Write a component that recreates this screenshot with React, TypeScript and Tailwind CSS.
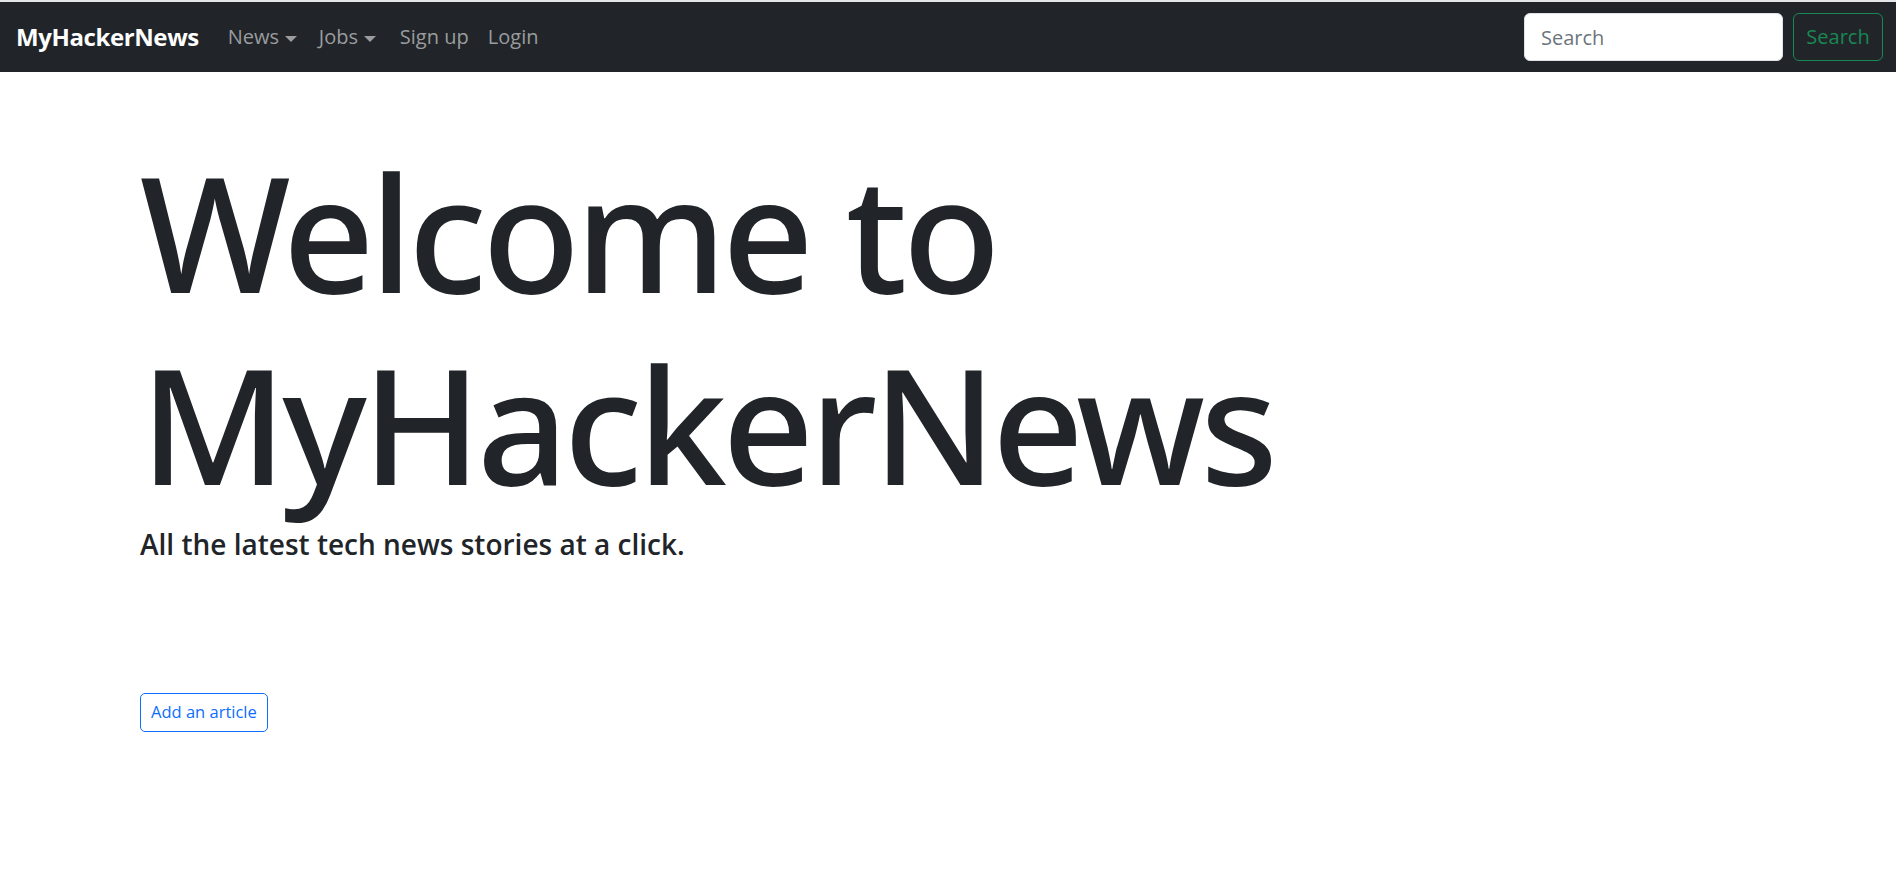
import React from 'react';

function Caret() {
  return (
    <span className="ml-[6px] inline-block h-0 w-0 border-x-[6px] border-t-[6px] border-x-transparent border-t-[#9a9c9e] align-middle" />
  );
}

export default function App() {
  const font = { fontFamily: '"Open Sans", "Noto Sans", sans-serif' };
  const headingFont = { fontFamily: '"Noto Sans", "Open Sans", sans-serif' };

  return (
    <div className="min-h-screen bg-white text-[#212529]" style={font}>
      {/* top hairline */}
      <div className="h-[2px] bg-[#e5e6e7]" />

      {/* Navbar */}
      <nav className="flex h-[70px] items-center justify-between bg-[#212529] pl-[16px] pr-[13px]">
        <div className="flex items-center">
          <a className="mr-[19px] whitespace-nowrap text-[24px] font-bold leading-none tracking-[-0.4px] text-white">MyHackerNews</a>
          <ul className="flex items-center whitespace-nowrap text-[20px] text-[#9a9c9e]">
            <li className="w-[91px] px-[10px]">
              News
              <Caret />
            </li>
            <li className="w-[81px] px-[10px]">
              Jobs
              <Caret />
            </li>
            <li className="w-[88px] px-[10px]">Sign up</li>
            <li className="px-[10px]">Login</li>
          </ul>
        </div>
        <form className="flex items-center gap-[10px]">
          <input
            placeholder="Search"
            className="h-[48px] w-[259px] rounded-[6px] border border-[#dee2e6] bg-white px-[16px] text-[20px] text-[#212529] outline-none placeholder:text-[#6c757d]"
          />
          <button
            type="button"
            className="h-[48px] w-[90px] rounded-[6px] border border-[#198754] text-[20px] text-[#198754]"
          >
            Search
          </button>
        </form>
      </nav>

      {/* Hero */}
      <main className="pl-[140px] pt-[63px]">
        <h1 className="text-[160px] font-medium leading-[192px] tracking-[-4.7px]" style={headingFont}>
          Welcome to
          <br />
          MyHackerNews
        </h1>
        <p className="mt-[4px] text-[28px] font-semibold leading-[42px]">
          All the latest tech news stories at a click.
        </p>
        <button
          type="button"
          className="mt-[128px] h-[39px] rounded-[5px] border border-[#0d6efd] px-[10px] text-[16.5px] text-[#0d6efd]"
        >
          Add an article
        </button>
      </main>
    </div>
  );
}
